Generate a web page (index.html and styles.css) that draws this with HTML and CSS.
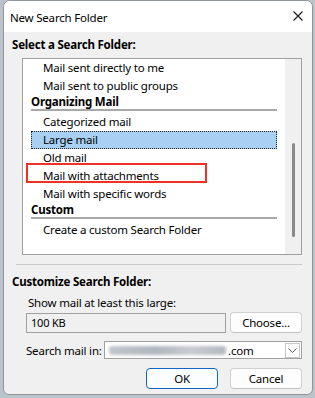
FILE: index.html
```html
<!DOCTYPE html>
<html lang="en">
<head>
    <meta charset="UTF-8">
    <meta name="viewport" content="width=device-width, initial-scale=1.0">
    <title>New Search Folder</title>
    <link rel="stylesheet" href="styles.css">
</head>
<body>
    <div class="window">
        <div class="titlebar">
            <span class="title">New Search Folder</span>
            <svg class="close" width="10" height="10" viewBox="0 0 10 10">
                <path d="M0.5 0.5 L9.5 9.5 M9.5 0.5 L0.5 9.5" stroke="#1a1a1a" stroke-width="1.1" fill="none"/>
            </svg>
        </div>
        <div class="content">
            <div class="section-label first">Select a Search Folder:</div>
            <div class="listbox">
                <ul class="items">
                    <li class="item">Mail sent directly to me</li>
                    <li class="item">Mail sent to public groups</li>
                    <li class="group">Organizing Mail</li>
                    <li class="item">Categorized mail</li>
                    <li class="item selected">Large mail</li>
                    <li class="item">Old mail</li>
                    <li class="item marked">Mail with attachments<span class="callout"></span></li>
                    <li class="item">Mail with specific words</li>
                    <li class="group">Custom</li>
                    <li class="item">Create a custom Search Folder</li>
                </ul>
                <div class="scrollbar"><div class="thumb"></div></div>
            </div>
            <div class="divider"></div>
            <div class="section-label">Customize Search Folder:</div>
            <div class="criteria">Show mail at least this large:</div>
            <div class="row size-row">
                <div class="textbox">100 KB</div>
                <button class="btn">Choose...</button>
            </div>
            <div class="row search-row">
                <span class="field-label">Search mail in:</span>
                <div class="combo">
                    <span class="blurred"></span><span class="domain">.com</span>
                    <span class="drop">
                        <svg width="9" height="5" viewBox="0 0 9 5">
                            <path d="M0.5 0.5 L4.5 4.5 L8.5 0.5" stroke="#555" stroke-width="1" fill="none"/>
                        </svg>
                    </span>
                </div>
            </div>
            <div class="actions">
                <button class="btn default">OK</button>
                <button class="btn">Cancel</button>
            </div>
        </div>
    </div>
</body>
</html>
```

FILE: styles.css
```css
body {
    margin: 0;
    background-color: #bcc3cb;
    font-family: "Noto Sans", "Open Sans", sans-serif;
    font-size: 11.5px;
    letter-spacing: -0.2px;
    color: #000;
}
.window {
    margin-left: 3px;
    width: 308px;
    height: 393px;
    border: 1px solid #8f959c;
    border-radius: 7px 7px 6px 6px;
    background-color: #f0f0f0;
    overflow: hidden;
}
.titlebar {
    height: 31px;
    background-color: #fff;
    display: flex;
    align-items: center;
    justify-content: space-between;
    padding: 0 9px 0 6px;
}
.title {
    font-size: 11.5px;
    margin-top: 1px;
}
.close {
    margin-top: -1px;
}
.content {
    padding: 0 10px 0 8px;
}
.section-label {
    font-weight: bold;
    line-height: 16px;
    margin-top: 9px;
}
.section-label.first {
    margin-top: 5px;
}
.listbox {
    margin: 5px 0 0 10px;
    height: 195px;
    border: 1px solid #a0a0a0;
    background-color: #fff;
    display: flex;
}
.items {
    list-style: none;
    margin: 0;
    padding: 0;
    flex: 1;
}
.items li {
    margin: 0 8px;
    height: 18px;
    line-height: 18px;
    box-sizing: border-box;
    position: relative;
    white-space: nowrap;
}
.item {
    padding-left: 12px;
}
.items .group {
    font-weight: bold;
    height: 16px;
    line-height: 14px;
    border-bottom: 2px solid #a8a8a8;
    margin-bottom: 2px;
}
.items .selected {
    background-color: #a8d0f3;
    border: 1px dotted #222;
    line-height: 16px;
    padding-left: 11px;
}
.callout {
    position: absolute;
    left: -5px;
    top: -4px;
    width: 181px;
    height: 20px;
    border: 2px solid #ee3223;
    box-sizing: border-box;
}
.scrollbar {
    width: 16px;
    background-color: #f0f0f0;
    display: flex;
    justify-content: center;
    padding-top: 84px;
    box-sizing: border-box;
}
.thumb {
    width: 3px;
    height: 94px;
    background-color: #8a8a8a;
    border-radius: 2px;
}
.divider {
    margin: 9px 0 0 4px;
    height: 1px;
    background-color: #c9c9c9;
}
.criteria {
    margin: 5px 0 0 16px;
    line-height: 16px;
}
.row {
    display: flex;
    align-items: center;
    margin-left: 14px;
}
.size-row {
    margin-top: 1px;
    justify-content: space-between;
}
.textbox {
    width: 194px;
    height: 18px;
    line-height: 18px;
    border: 1px solid #a0a0a0;
    padding-left: 4px;
    background-color: #f0f0f0;
    font-size: 11px;
}
.btn {
    width: 72px;
    height: 21px;
    font-family: inherit;
    font-size: 11.5px;
    letter-spacing: -0.2px;
    color: #000;
    background-color: #fdfdfd;
    border: 1px solid #d0d0d0;
    border-bottom-color: #c2c2c2;
    border-radius: 4px;
    padding: 0;
}
.search-row {
    margin-top: 8px;
}
.field-label {
    width: 78px;
    flex-shrink: 0;
    white-space: nowrap;
}
.combo {
    flex: 1;
    height: 16px;
    border: 1px solid #a0a0a0;
    background-color: #fff;
    display: flex;
    align-items: center;
    padding-left: 4px;
}
.blurred {
    width: 117px;
    height: 9px;
    background: linear-gradient(90deg, #c2c6cc, #b0b6bf 40%, #c9ccd2 70%, #b3b8c0);
    filter: blur(1.6px);
    border-radius: 3px;
}
.domain {
    flex: 1;
    margin-left: 2px;
}
.drop {
    width: 13px;
    height: 13px;
    margin-right: 1px;
    border: 1px solid #c8c8c8;
    display: flex;
    align-items: center;
    justify-content: center;
}
.actions {
    display: flex;
    justify-content: flex-end;
    gap: 12px;
    margin-top: 9px;
}
.btn.default {
    border: 1px solid #0f67c2;
    background-color: #fbfdff;
}
```
